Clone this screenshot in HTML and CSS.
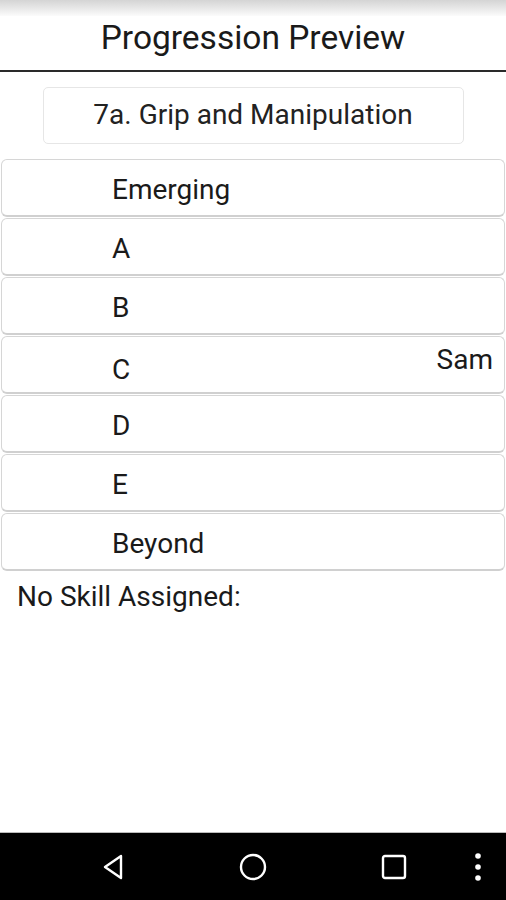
FILE: index.html
```html
<!DOCTYPE html>
<html lang="en">
<head>
  <meta charset="UTF-8" />
  <title>Progression Preview</title>
  <link rel="stylesheet" href="styles.css">
</head>
<body>
  <div class="screen">
    <div class="status-shade"></div>
    <h1 class="title">Progression Preview</h1>

    <div class="content">
      <div class="subject">7a. Grip and Manipulation</div>

      <div class="levels">
        <div class="level"><span class="label">Emerging</span></div>
        <div class="level"><span class="label">A</span></div>
        <div class="level"><span class="label">B</span></div>
        <div class="level has-student"><span class="label">C</span><span class="student">Sam</span></div>
        <div class="level"><span class="label">D</span></div>
        <div class="level"><span class="label">E</span></div>
        <div class="level"><span class="label">Beyond</span></div>
      </div>

      <div class="unassigned">No Skill Assigned:</div>
    </div>

    <div class="navbar">
      <svg class="nav-icon" width="26" height="28" viewBox="0 0 26 28">
        <path d="M20 3 L4 14 L20 25 Z" fill="none" stroke="#fff" stroke-width="2.4" stroke-linejoin="round"/>
      </svg>
      <svg class="nav-icon" width="30" height="30" viewBox="0 0 30 30">
        <circle cx="15" cy="15" r="12" fill="none" stroke="#fff" stroke-width="2.4"/>
      </svg>
      <svg class="nav-icon" width="28" height="28" viewBox="0 0 28 28">
        <rect x="3" y="3" width="22" height="22" rx="2" fill="none" stroke="#fff" stroke-width="2.4"/>
      </svg>
      <svg class="nav-more" width="8" height="30" viewBox="0 0 8 30">
        <circle cx="4" cy="4" r="2.8" fill="#fff"/>
        <circle cx="4" cy="15" r="2.8" fill="#fff"/>
        <circle cx="4" cy="26" r="2.8" fill="#fff"/>
      </svg>
    </div>
  </div>
</body>
</html>
```

FILE: styles.css
```css
html, body {
  margin: 0;
  padding: 0;
}
body {
  background: #fff;
  color: #1a1a1a;
  font-family: Roboto, "Noto Sans", sans-serif;
}
.screen {
  display: flex;
  flex-direction: column;
  height: 900px;
}
.status-shade {
  height: 16px;
  background: linear-gradient(#d4d4d4, #fbfbfb);
}
.title {
  margin: 0;
  height: 54px;
  line-height: 44px;
  font-size: 33.5px;
  font-weight: 400;
  text-align: center;
  border-bottom: 2px solid #2a2a2a;
}
.content {
  flex: 1;
}
.subject {
  width: 419px;
  height: 55px;
  margin: 15px auto 15px;
  border: 1px solid #e6e6e6;
  border-radius: 5px;
  font-size: 28px;
  line-height: 53px;
  text-align: center;
  color: #222;
}
.levels {
  display: flex;
  flex-direction: column;
  gap: 1px;
  padding: 0 1px 0 1px;
}
.level {
  display: flex;
  justify-content: space-between;
  height: 55px;
  border: 1px solid #d6d6d6;
  border-bottom: 2px solid #d0d0d0;
  border-radius: 6px;
  font-size: 28px;
}
.label {
  align-self: center;
  padding-left: 110px;
  padding-top: 4px;
}
.has-student .label {
  padding-top: 9px;
}
.student {
  align-self: flex-start;
  margin-top: 6px;
  padding-right: 11px;
}
.unassigned {
  padding: 9px 0 0 17px;
  font-size: 28px;
}
.navbar {
  display: flex;
  align-items: center;
  height: 67px;
  background: #000;
  border-top: 1px solid #bbb;
  position: relative;
}
.nav-icon {
  position: absolute;
}
.nav-icon:nth-child(1) { left: 101px; }
.nav-icon:nth-child(2) { left: 238px; }
.nav-icon:nth-child(3) { left: 380px; }
.nav-more {
  position: absolute;
  left: 474px;
}
```
